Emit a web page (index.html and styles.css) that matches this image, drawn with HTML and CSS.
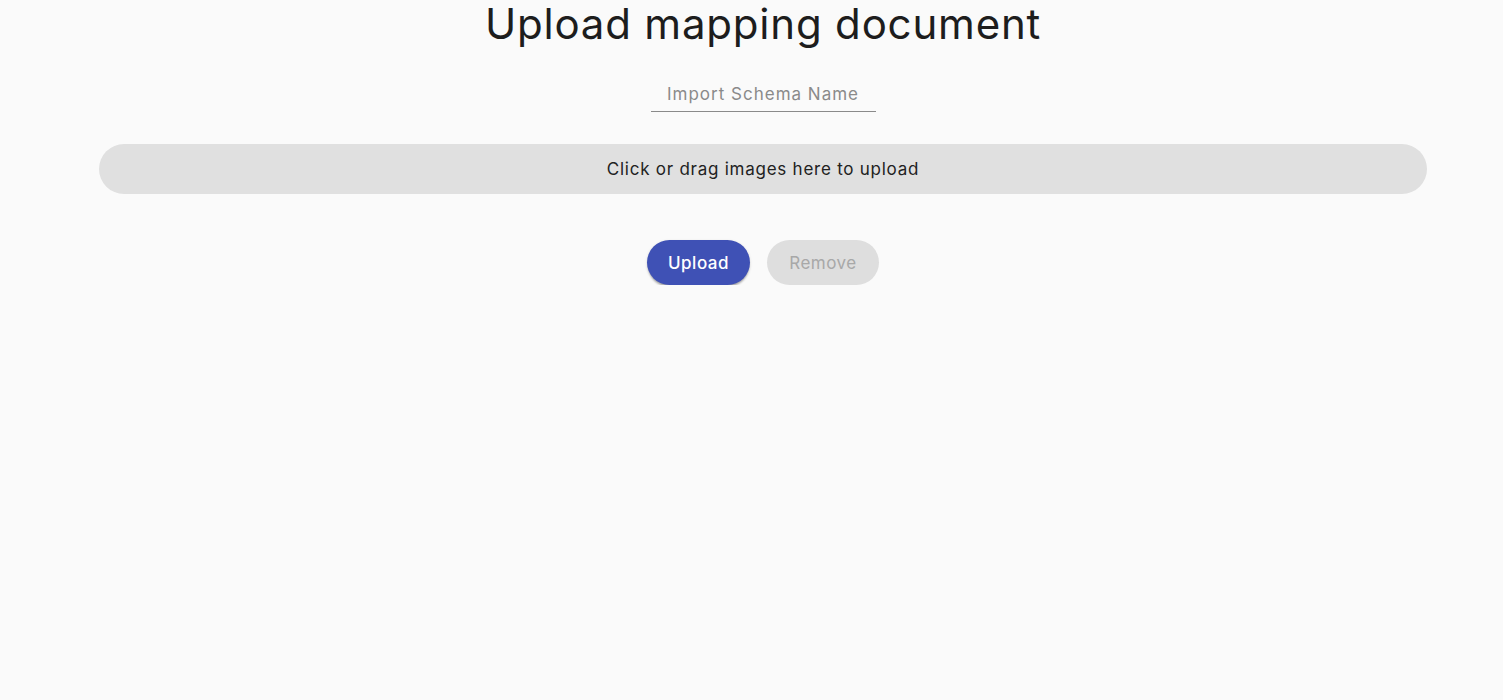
FILE: index.html
```html
<!DOCTYPE html>
<html lang="en">
<head>
<meta charset="utf-8">
<title>Upload mapping document</title>
<link rel="stylesheet" href="styles.css">
</head>
<body>
<main class="page">
  <h1 class="title">Upload mapping document</h1>
  <div class="field">
    <input class="field-input" type="text" placeholder="Import Schema Name">
  </div>
  <div class="dropzone">Click or drag images here to upload</div>
  <div class="actions">
    <button class="btn btn-primary" type="button">Upload</button>
    <button class="btn btn-disabled" type="button" disabled>Remove</button>
  </div>
</main>
</body>
</html>
```

FILE: styles.css
```css
html, body {
  margin: 0;
  padding: 0;
  background: #fafafa;
}
body {
  font-family: "Inter", "Open Sans", sans-serif;
  color: #222;
}
.page {
  padding: 0 76px 0 99px;
  display: flex;
  flex-direction: column;
  align-items: center;
}
.title {
  margin: 0;
  padding-top: 0;
  font-size: 42px;
  font-weight: 400;
  line-height: 48px;
  color: #1d1d1d;
  letter-spacing: 0.8px;
}
.field {
  margin-top: 30px;
  width: 225px;
}
.field-input {
  width: 100%;
  box-sizing: border-box;
  border: none;
  border-bottom: 1px solid #8a8a8a;
  background: transparent;
  font-family: inherit;
  font-size: 17px;
  letter-spacing: 1px;
  line-height: 24px;
  padding: 4px 0 5px;
  text-align: center;
  outline: none;
  color: #333;
}
.field-input::placeholder {
  color: #8a8a8a;
}
.dropzone {
  margin-top: 32px;
  align-self: stretch;
  height: 50px;
  border-radius: 25px;
  background: #e0e0e0;
  display: flex;
  align-items: center;
  justify-content: center;
  font-size: 17px;
  letter-spacing: 0.75px;
  color: #222;
}
.actions {
  margin-top: 46px;
  display: flex;
  gap: 17px;
}
.btn {
  height: 45px;
  border: none;
  border-radius: 23px;
  font-family: inherit;
  font-size: 17px;
  letter-spacing: 0.5px;
  padding: 0 10px;
  cursor: pointer;
}
.btn-primary {
  width: 103px;
  background: #3f51b5;
  color: #fff;
  font-weight: 500;
  box-shadow: 0 3px 2px -1px rgba(0,0,0,0.25), 0 1px 3px rgba(0,0,0,0.15);
}
.btn-disabled {
  width: 112px;
  background: #dedede;
  color: #a8a8a8;
}
```
